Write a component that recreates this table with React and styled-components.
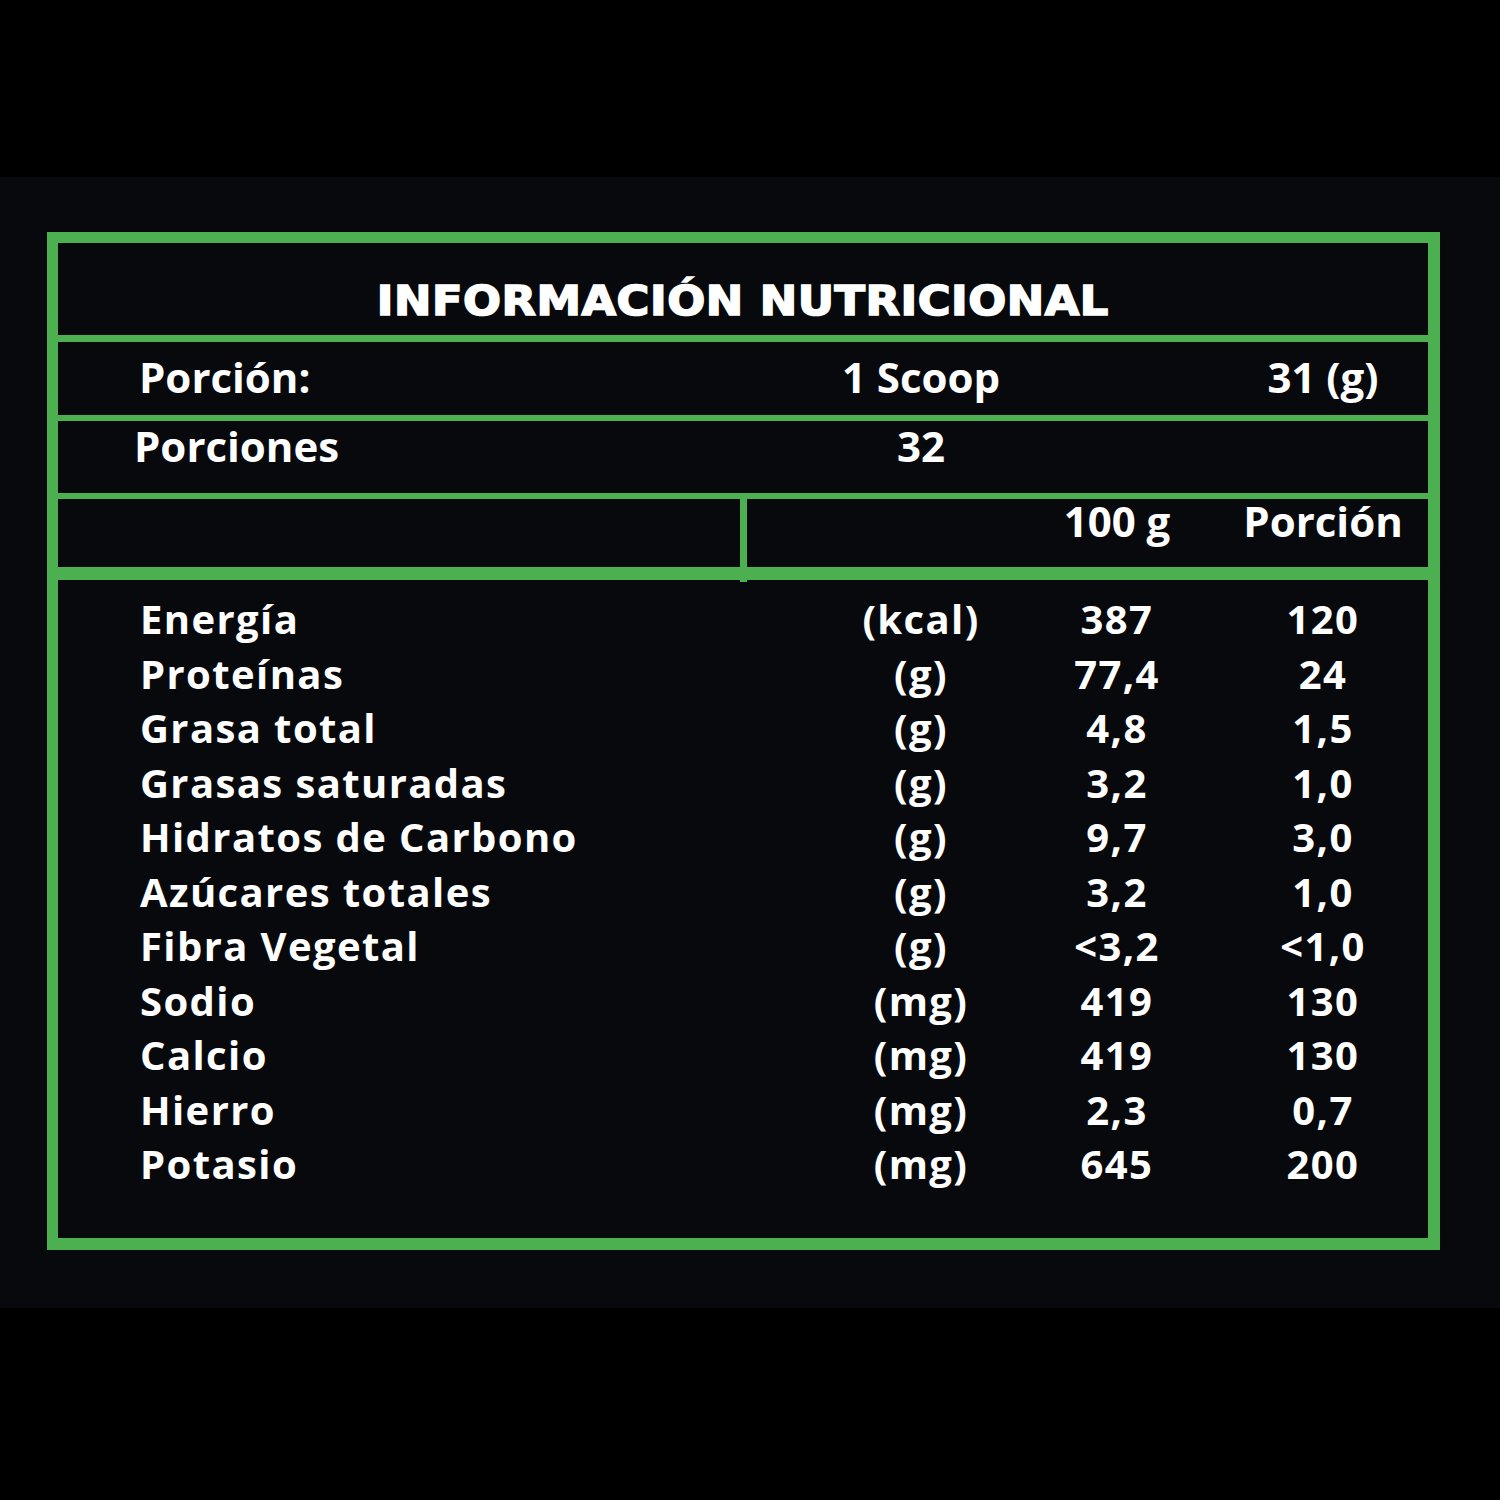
import React from 'react';
import styled, { createGlobalStyle } from 'styled-components';

const GREEN = '#4caf50';

const GlobalStyle = createGlobalStyle`
  html, body {
    margin: 0;
    padding: 0;
    background: #000;
  }
`;

const Page = styled.div`
  width: 1500px;
  height: 1500px;
  padding-top: 177px;
  box-sizing: border-box;
  background: #000;
  font-family: 'Open Sans', 'Liberation Sans', sans-serif;
  color: #fff;
`;

const Panel = styled.div`
  background: #08090d;
  height: 1131px;
  box-sizing: border-box;
  padding: 55px 60px 0 47px;
`;

const Box = styled.div`
  border: solid ${GREEN};
  border-width: 11px 12px 12px 11px;
  box-sizing: border-box;
  width: 1393px;
  height: 1018px;
  display: flex;
  flex-direction: column;
`;

const TitleRow = styled.div`
  height: 92px;
  border-bottom: 7px solid ${GREEN};
  box-sizing: content-box;
  text-align: center;
`;

const Title = styled.h1`
  margin: 0;
  padding-top: 38px;
  font-family: 'DejaVu Sans', 'Liberation Sans', sans-serif;
  font-weight: 700;
  font-size: 41px;
  line-height: 1;
  letter-spacing: 0.5px;
  display: inline-block;
  transform: scaleX(1.09);
  -webkit-text-stroke: 1.6px #fff;
`;

const InfoRow = styled.div`
  height: ${p => p.h}px;
  border-bottom: ${p => p.line}px solid ${GREEN};
  box-sizing: border-box;
  display: grid;
  grid-template-columns: ${p => p.cols};
  align-items: start;
  padding-top: ${p => p.top}px;
  font-size: 42px;
  font-weight: 700;
  line-height: 1;
`;

const Label = styled.div`
  padding-left: ${p => p.indent}px;
  white-space: nowrap;
`;

const Cell = styled.div`
  text-align: center;
  white-space: nowrap;
`;

const HeaderBlank = styled.div`
  align-self: stretch;
  border-right: 7px solid ${GREEN};
  margin-top: -2px;
  margin-bottom: -15px;
`;

const Body = styled.div`
  padding-top: 12px;
  font-size: 40px;
  font-weight: 700;
  letter-spacing: 1.4px;
  line-height: 54.5px;
`;

const BodyRow = styled.div`
  display: grid;
  grid-template-columns: 783px 160px 232px 180px;
`;

const COLS = '783px 160px 232px 180px';

const nutrients = [
  ['Energía', '(kcal)', '387', '120'],
  ['Proteínas', '(g)', '77,4', '24'],
  ['Grasa total', '(g)', '4,8', '1,5'],
  ['Grasas saturadas', '(g)', '3,2', '1,0'],
  ['Hidratos de Carbono', '(g)', '9,7', '3,0'],
  ['Azúcares totales', '(g)', '3,2', '1,0'],
  ['Fibra Vegetal', '(g)', '<3,2', '<1,0'],
  ['Sodio', '(mg)', '419', '130'],
  ['Calcio', '(mg)', '419', '130'],
  ['Hierro', '(mg)', '2,3', '0,7'],
  ['Potasio', '(mg)', '645', '200'],
];

const App = () => (
  <Page>
    <GlobalStyle />
    <Panel>
      <Box>
        <TitleRow>
          <Title>INFORMACIÓN NUTRICIONAL</Title>
        </TitleRow>
        <InfoRow h={79} line={6} top={14} cols={COLS}>
          <Label indent={81}>Porción:</Label>
          <Cell>1 Scoop</Cell>
          <Cell />
          <Cell>31 (g)</Cell>
        </InfoRow>
        <InfoRow h={78} line={6} top={4} cols={COLS}>
          <Label indent={76}>Porciones</Label>
          <Cell>32</Cell>
          <Cell />
          <Cell />
        </InfoRow>
        <InfoRow h={81} line={13} top={1} cols="689px 254px 232px 180px">
          <HeaderBlank />
          <Cell />
          <Cell>100 g</Cell>
          <Cell>Porción</Cell>
        </InfoRow>
        <Body>
          {nutrients.map(([name, unit, per100, perServing]) => (
            <BodyRow key={name}>
              <Label indent={82}>{name}</Label>
              <Cell>{unit}</Cell>
              <Cell>{per100}</Cell>
              <Cell>{perServing}</Cell>
            </BodyRow>
          ))}
        </Body>
      </Box>
    </Panel>
  </Page>
);

export default App;
